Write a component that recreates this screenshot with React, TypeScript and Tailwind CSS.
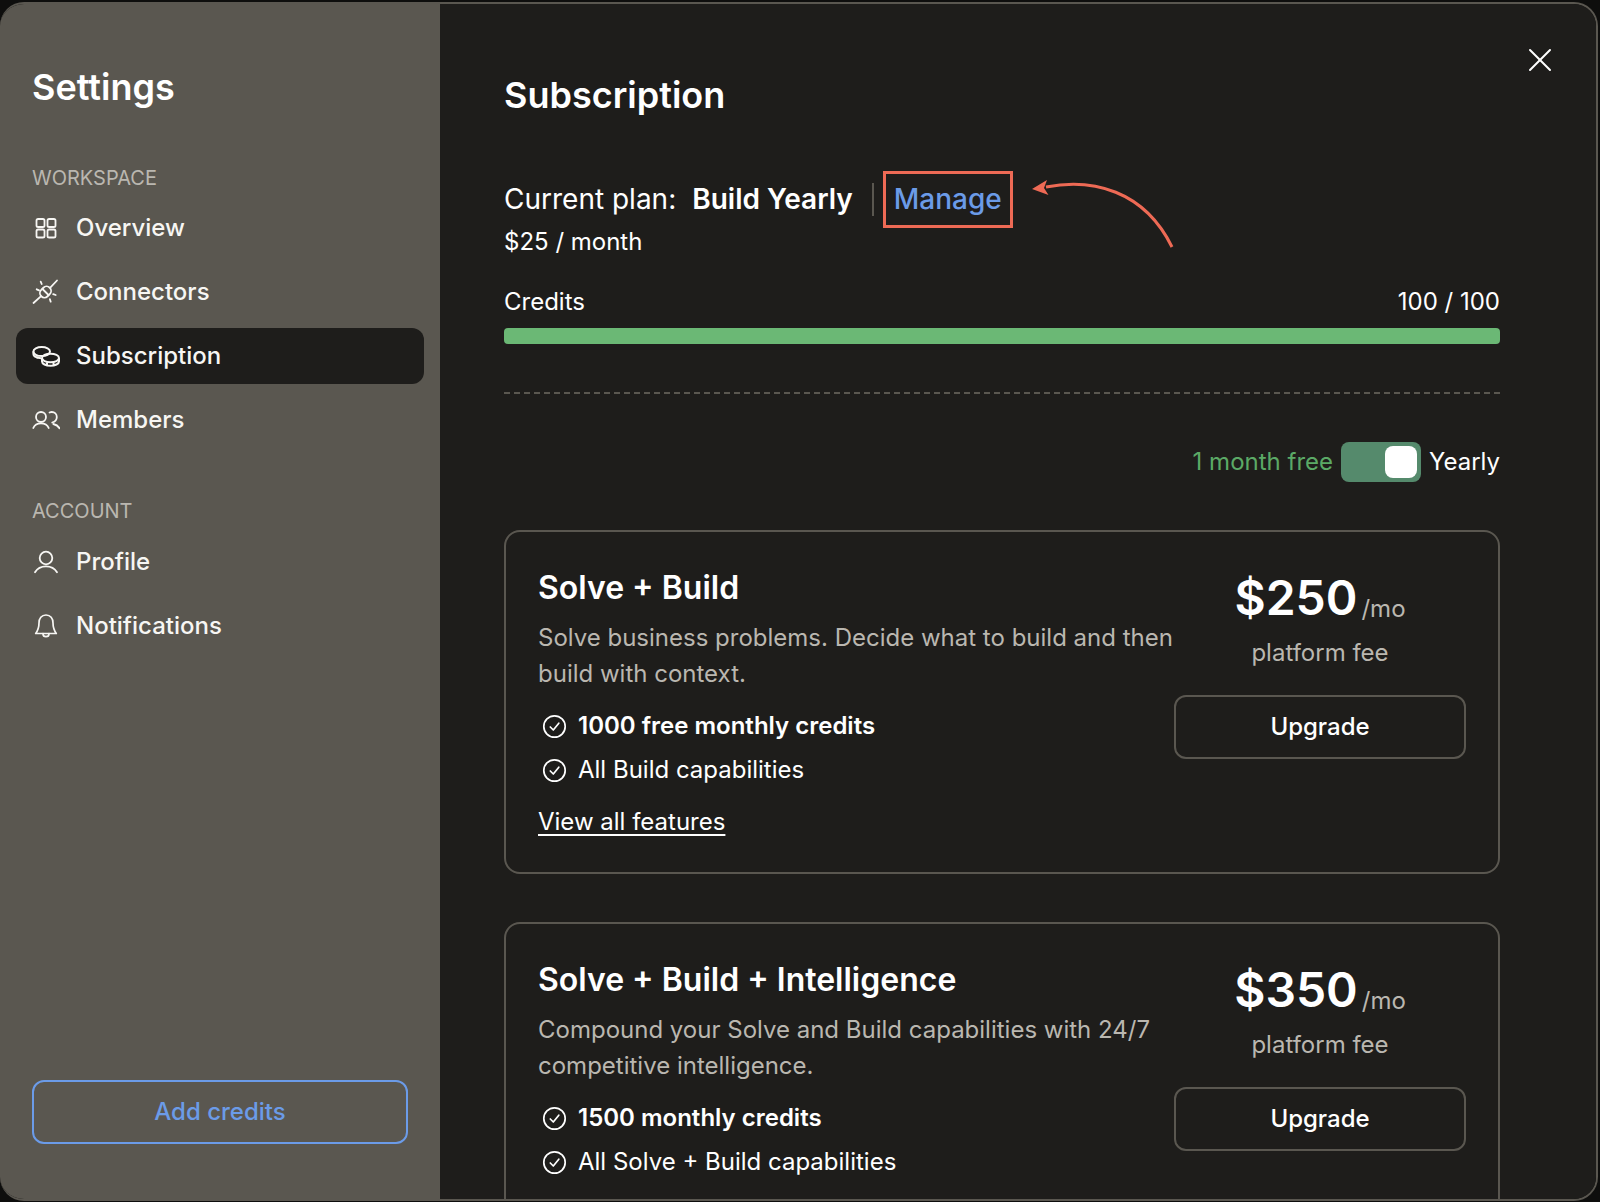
import React from "react";
import { X } from "lucide-react";

const OverviewIcon = () => (
  <svg width="28" height="28" viewBox="0 0 28 28" fill="none" stroke="currentColor" strokeWidth="1.8">
    <rect x="4.5" y="5" width="8" height="8" rx="1.6" />
    <rect x="15.5" y="5" width="8" height="8" rx="1.6" />
    <rect x="4.5" y="15.500" width="8" height="8" rx="1.6" />
    <rect x="15.5" y="15.500" width="8" height="8" rx="1.6" />
  </svg>
);
const ConnectorIcon = () => (
  <svg width="28" height="28" viewBox="0 0 28 28" fill="none" stroke="currentColor" strokeWidth="1.8" strokeLinecap="round">
    <path d="M1.500 25L8.800 18.300M18.500 9.300L25 2.500" />
    <rect x="7.500" y="9.500" width="12" height="9" rx="4.500" transform="rotate(-45 13.500 14)" />
    <path d="M10.500 11l6 6" />
    <path d="M8.700 3.700l1 2.300M4.700 11.300l2.300 1M23.700 17l-2.500-.8M18.700 23.700l-.8-2.500" />
  </svg>
);
const CoinsIcon = () => (
  <svg width="28" height="28" viewBox="0 0 28 28" fill="none" stroke="currentColor" strokeWidth="2">
    <ellipse cx="9.700" cy="9.600" rx="8.300" ry="4.500" />
    <path d="M1.400 9.600v2.400c0 2.300 3 3.800 7.600 4.200" />
    <ellipse cx="18.500" cy="16" rx="8.500" ry="4.300" />
    <path d="M10 16v3.500c0 2.400 3.800 4.200 8.500 4.200s8.500-1.800 8.500-4.200V16M15 20.500v3M21.500 20.500v3" />
    <path d="M5.500 14.500v2" />
  </svg>
);
const MembersIcon = () => (
  <svg width="28" height="28" viewBox="0 0 28 28" fill="none" stroke="currentColor" strokeWidth="1.8" strokeLinecap="round">
    <circle cx="9" cy="11" r="5" />
    <path d="M1.300 22c1.200-3 4.200-4.700 7.700-4.700s6.500 1.700 7.700 4.700" />
    <path d="M17.500 6.500c.8-.3 1.500-.5 2.300-.5 2.800 0 5 2.200 5 5s-2 4.800-4.600 5.500" />
    <path d="M21.300 18c2.800.6 5 2 6.200 4.300" />
  </svg>
);
const ProfileIcon = () => (
  <svg width="28" height="28" viewBox="0 0 28 28" fill="none" stroke="currentColor" strokeWidth="1.8" strokeLinecap="round">
    <circle cx="14" cy="10" r="6.300" />
    <path d="M3 24.300c2.200-3.800 6.200-6 11-6s8.800 2.200 11 6" />
  </svg>
);
const BellIcon = () => (
  <svg width="28" height="28" viewBox="0 0 28 28" fill="none" stroke="currentColor" strokeWidth="1.7" strokeLinecap="round" strokeLinejoin="round">
    <path d="M14 3c-4.500 0-7 3.500-7 8 0 5-1.500 8-3.300 10.500H24.300C22.500 19 21 16 21 11c0-4.500-2.500-8-7-8z" />
    <path d="M11 21.700a3 3 0 0 0 6 0" />
  </svg>
);
const CheckIcon = () => (
  <svg width="25" height="25" viewBox="0 0 25 25" fill="none" stroke="white" strokeWidth="1.7" strokeLinecap="round" strokeLinejoin="round" className="shrink-0">
    <circle cx="12.500" cy="12.500" r="10.700" />
    <path d="M8.300 13l3 3 5.500-6.800" />
  </svg>
);

const NavItem = ({ icon, label, active }: { icon: React.ReactNode; label: string; active?: boolean }) => (
  <div className={`flex h-[56px] items-center gap-[16px] rounded-[12px] px-[16px] text-[24px] font-medium leading-none text-[#f7f6f3] ${active ? "bg-[#1e1d1b]" : ""}`}>
    <span className="flex w-[28px] shrink-0 justify-center">{icon}</span>
    <span>{label}</span>
  </div>
);

const Feature = ({ bold, children }: { bold?: boolean; children: React.ReactNode }) => (
  <div className="flex h-[44px] items-center gap-[11px] pl-[4px]">
    <CheckIcon />
    <span className={`text-[24px] text-white ${bold ? "font-semibold" : "font-normal"}`}>{children}</span>
  </div>
);

const Plan = ({ title, desc, price, features, link }: { title: string; desc: string; price: string; features: { t: string; b?: boolean }[]; link?: boolean }) => (
  <div className="flex rounded-[16px] border-2 border-[#5a5750] p-[32px]">
    <div className="min-w-0 flex-1">
      <div className="text-[32px] font-semibold leading-[48px] text-white">{title}</div>
      <p className="mt-[8px] w-[650px] text-[24px] leading-[36px] text-[#bab7b0]">{desc}</p>
      <div className="mt-[12px]">
        {features.map((f) => (
          <Feature key={f.t} bold={f.b}>{f.t}</Feature>
        ))}
      </div>
      {link && <a className="mt-[12px] block w-fit text-[24px] leading-[36px] text-white underline underline-offset-[4px]">View all features</a>}
    </div>
    <div className="flex w-[292px] shrink-0 flex-col items-center pt-[4px]">
      <div className="flex items-baseline gap-[4px]">
        <span className="text-[48px] font-semibold leading-[60px] text-white">{price}</span>
        <span className="translate-y-[2px] text-[24px] text-[#bab7b0]">/mo</span>
      </div>
      <div className="mt-[7px] text-[24px] leading-[36px] text-[#bab7b0]">platform fee</div>
      <button className="mt-[24px] h-[64px] w-full rounded-[12px] border-2 border-[#5a5750] text-[24px] font-medium text-white">Upgrade</button>
    </div>
  </div>
);

export default function App() {
  return (
    <div className="h-[1202px] w-[1600px] overflow-hidden bg-[#0e0e0d] pt-[2px] font-['Inter',sans-serif]">
      <div className="flex h-[1199px] w-[1598px] overflow-hidden rounded-[24px] border-b-2 border-r-2 border-t-2 border-[#5a5750]">
        <aside className="flex w-[440px] shrink-0 flex-col bg-[#5a5750] pb-[55px] pl-[16px] pr-[16px] pt-[55px]">
          <h2 className="pl-[16px] text-[36px] font-semibold leading-[56px] text-white">Settings</h2>
          <div className="mt-[49px] pl-[16px] text-[20px] leading-[28px] text-[#bab7b0]">WORKSPACE</div>
          <div className="mt-[8px] flex flex-col gap-[8px]">
            <NavItem icon={<OverviewIcon />} label="Overview" />
            <NavItem icon={<ConnectorIcon />} label="Connectors" />
            <NavItem icon={<CoinsIcon />} label="Subscription" active />
            <NavItem icon={<MembersIcon />} label="Members" />
          </div>
          <div className="mt-[49px] pl-[16px] text-[20px] leading-[28px] text-[#bab7b0]">ACCOUNT</div>
          <div className="mt-[9px] flex flex-col gap-[8px]">
            <NavItem icon={<ProfileIcon />} label="Profile" />
            <NavItem icon={<BellIcon />} label="Notifications" />
          </div>
          <button className="mx-[16px] mt-auto h-[64px] rounded-[12px] border-2 border-[#6b9be8] text-[24px] font-medium text-[#6b9be8]">Add credits</button>
        </aside>
        <main className="relative min-w-0 flex-1 bg-[#1e1d1b] pl-[64px] pr-[96px] pt-[63px]">
          <X size={40} strokeWidth={1.2} className="absolute right-[36px] top-[36px] text-white" />
          <h1 className="text-[36px] font-semibold leading-[56px] text-white">Subscription</h1>
          <div className="relative mt-[48px] flex h-[57px] items-center text-[28px] text-white">
            <span className="-translate-y-[1px]">Current plan:</span>
            <span className="ml-[16px] -translate-y-[1px] font-semibold">Build Yearly</span>
            <span className="ml-[19px] h-[33px] w-[2px] bg-[#5a5750]" />
            <span className="ml-[9px] flex h-[57px] items-center border-[3px] border-[#ee6a55] px-[8px] font-medium text-[#6b9be8]">
              <span className="-translate-y-[1px]">Manage</span>
            </span>
            <svg className="absolute left-[528px] top-[9px] overflow-visible" width="150" height="72" viewBox="0 0 150 72" fill="none">
              <path d="M14 7C60 -2 112 10 140 67" stroke="#ee6a55" strokeWidth="3" />
              <path d="M0 9L15 0L12 8L16.500 15z" fill="#ee6a55" />
            </svg>
          </div>
          <div className="-mt-[1px] text-[24px] leading-[30px] text-white">$25 / month</div>
          <div className="mt-[29px] flex justify-between text-[24px] leading-[32px] text-white">
            <span>Credits</span>
            <span>100 / 100</span>
          </div>
          <div className="mt-[10px] h-[16px] rounded-[4px] bg-[#6bb875]" />
          <div className="mt-[48px] border-t-2 border-dashed border-[#5a5750]" />
          <div className="mt-[48px] flex h-[40px] items-center justify-end text-[24px]">
            <span className="text-[#5ba966]">1 month free</span>
            <div className="ml-[8px] mr-[8px] flex h-[40px] w-[80px] items-center justify-end rounded-[8px] bg-[#558a6c] pr-[4px]">
              <div className="h-[32px] w-[32px] rounded-[8px] bg-white" />
            </div>
            <span className="text-white">Yearly</span>
          </div>
          <div className="mt-[48px] flex flex-col gap-[48px]">
            <Plan
              title="Solve + Build"
              desc="Solve business problems. Decide what to build and then build with context."
              price="$250"
              link
              features={[{ t: "1000 free monthly credits", b: true }, { t: "All Build capabilities" }]}
            />
            <Plan
              title="Solve + Build + Intelligence"
              desc="Compound your Solve and Build capabilities with 24/7 competitive intelligence."
              price="$350"
              features={[{ t: "1500 monthly credits", b: true }, { t: "All Solve + Build capabilities" }]}
            />
          </div>
        </main>
      </div>
    </div>
  );
}
